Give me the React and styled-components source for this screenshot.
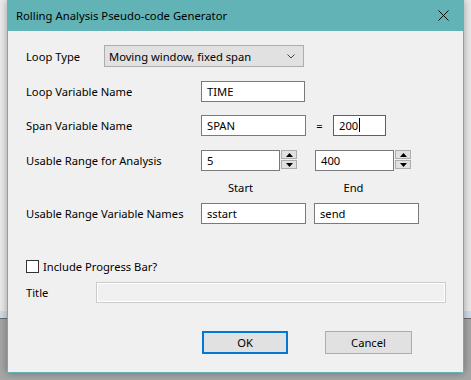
import React from "react";
import styled, { createGlobalStyle } from "styled-components";

const GlobalStyle = createGlobalStyle`
  html, body {
    margin: 0;
    padding: 0;
    height: 380px;
    overflow: hidden;
  }
  body {
    font-family: "Noto Sans", "Open Sans", sans-serif;
    font-size: 11.2px;
    color: #000;
    background: linear-gradient(
      to bottom,
      #ebebeb 0px,
      #ebebeb 311px,
      #d3dde9 311px,
      #d3dde9 318px,
      #6b6b6b 318px,
      #6b6b6b 319px,
      #a6a6a6 319px,
      #a6a6a6 380px
    );
  }
`;

const Desktop = styled.div`
  display: flex;
  padding-left: 7px;
`;

const Window = styled.div`
  width: 455px;
  height: 372px;
  border: 1px solid #62b3b6;
  border-top: none;
  background: #f0f0f0;
  box-shadow: 0 0 8px rgba(0, 0, 0, 0.35);
  display: flex;
  flex-direction: column;
`;

const TitleBar = styled.div`
  height: 31px;
  flex-shrink: 0;
  background: #62b3b6;
  display: flex;
  align-items: center;
  justify-content: space-between;
  padding: 0 10px 1px 8px;
  box-sizing: border-box;
  color: #000;
  font-size: 11.3px;
`;

const CloseButton = styled.div`
  width: 12px;
  height: 12px;
  display: flex;
  align-items: center;
  justify-content: center;
  margin-right: 4px;
`;

const Body = styled.div`
  padding: 14px 0 0 18px;
  display: flex;
  flex-direction: column;
`;

const Row = styled.div`
  display: flex;
  align-items: center;
  height: ${(p) => p.$h || 20}px;
  margin-top: ${(p) => p.$mt || 0}px;
`;

const Label = styled.div`
  width: ${(p) => p.$w || 175}px;
  flex-shrink: 0;
  white-space: nowrap;
`;

const Select = styled.div`
  width: 200px;
  height: 22px;
  box-sizing: border-box;
  border: 1px solid #adadad;
  background: #e1e1e1;
  display: flex;
  align-items: center;
  justify-content: space-between;
  padding: 0 8px 0 4px;
`;

const Input = styled.div`
  width: ${(p) => p.$w}px;
  height: 21px;
  box-sizing: border-box;
  border: 1px solid ${(p) => (p.$focus ? "#0078d7" : "#7a7a7a")};
  background: ${(p) => (p.$disabled ? "#f0f0f0" : "#fff")};
  ${(p) => p.$disabled && "border-color: #cccccc; box-shadow: inset 0 0 0 1px #fff;"}
  display: flex;
  align-items: center;
  padding-left: 5px;
  flex-shrink: 0;
`;

const Caret = styled.span`
  display: inline-block;
  width: 1px;
  height: 14px;
  background: #000;
  margin-left: 1px;
`;

const Equals = styled.div`
  width: 27px;
  text-align: center;
`;

const Spinner = styled.div`
  display: flex;
  flex-direction: column;
  gap: 1px;
  margin-left: 1px;
  height: 20px;
`;

const SpinButton = styled.div`
  width: 16px;
  height: 9px;
  box-sizing: border-box;
  border: 1px solid #adadad;
  background: #e1e1e1;
  display: flex;
  align-items: center;
  justify-content: center;
`;

const Pair = styled.div`
  display: flex;
  align-items: center;
  margin-right: ${(p) => p.$mr || 0}px;
`;

const Caption = styled.div`
  width: ${(p) => p.$w}px;
  text-align: center;
`;

const Checkbox = styled.div`
  width: 13px;
  height: 13px;
  box-sizing: border-box;
  border: 1px solid #333;
  background: #fff;
  margin-right: 4px;
`;

const ButtonRow = styled.div`
  display: flex;
  margin-top: 29px;
  padding-left: 176px;
  gap: 37px;
`;

const Button = styled.div`
  width: ${(p) => p.$w}px;
  height: 23px;
  box-sizing: border-box;
  border: ${(p) => (p.$default ? "2px solid #0078d7" : "1px solid #adadad")};
  background: #e1e1e1;
  display: flex;
  align-items: center;
  justify-content: center;
`;

const Arrow = ({ up }) => (
  <svg width="7" height="4" viewBox="0 0 7 4">
    <path d={up ? "M3.5 0 L7 4 L0 4 Z" : "M0 0 L7 0 L3.5 4 Z"} fill="#000" />
  </svg>
);

const SpinBox = ({ value, mr }) => (
  <Pair $mr={mr}>
    <Input $w={79}>{value}</Input>
    <Spinner>
      <SpinButton>
        <Arrow up />
      </SpinButton>
      <SpinButton>
        <Arrow />
      </SpinButton>
    </Spinner>
  </Pair>
);

export default function App() {
  return (
    <>
      <GlobalStyle />
      <Desktop>
        <Window>
          <TitleBar>
            <span>Rolling Analysis Pseudo-code Generator</span>
            <CloseButton>
              <svg width="11" height="11" viewBox="0 0 11 11">
                <path d="M0.5 0.5 L10.5 10.5 M10.5 0.5 L0.5 10.5" stroke="#000" strokeWidth="1" />
              </svg>
            </CloseButton>
          </TitleBar>
          <Body>
            <Row $h={22}>
              <Label $w={78}>Loop Type</Label>
              <Select>
                <span>Moving window, fixed span</span>
                <svg width="8" height="5" viewBox="0 0 8 5">
                  <path d="M0.5 0.5 L4 4 L7.5 0.5" stroke="#444" fill="none" />
                </svg>
              </Select>
            </Row>
            <Row $mt={14}>
              <Label>Loop Variable Name</Label>
              <Input $w={104}>TIME</Input>
            </Row>
            <Row $mt={14}>
              <Label>Span Variable Name</Label>
              <Input $w={105}>SPAN</Input>
              <Equals>=</Equals>
              <Input $w={53} $focus>
                200
                <Caret />
              </Input>
            </Row>
            <Row $mt={15}>
              <Label>Usable Range for Analysis</Label>
              <SpinBox value="5" mr={18} />
              <SpinBox value="400" />
            </Row>
            <Row $mt={7}>
              <Label />
              <Caption $w={79}>Start</Caption>
              <Caption $w={34} />
              <Caption $w={79}>End</Caption>
            </Row>
            <Row $mt={6}>
              <Label>Usable Range Variable Names</Label>
              <Input $w={105} style={{ marginRight: 8 }}>sstart</Input>
              <Input $w={105}>send</Input>
            </Row>
            <Row $mt={35} $h={16}>
              <Checkbox />
              <span>Include Progress Bar?</span>
            </Row>
            <Row $mt={8}>
              <Label $w={70}>Title</Label>
              <Input $w={350} $disabled />
            </Row>
            <ButtonRow>
              <Button $w={86} $default>OK</Button>
              <Button $w={87}>Cancel</Button>
            </ButtonRow>
          </Body>
        </Window>
      </Desktop>
    </>
  );
}
